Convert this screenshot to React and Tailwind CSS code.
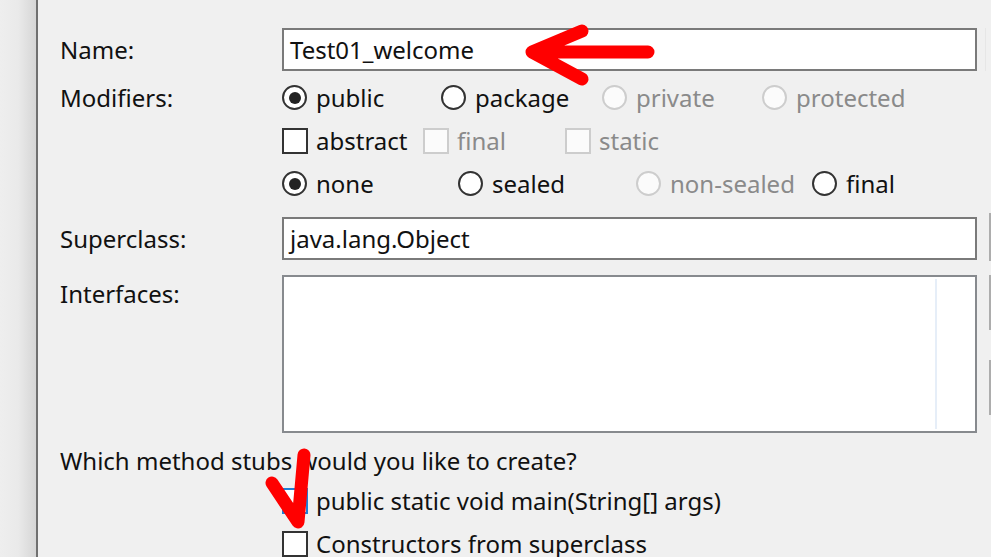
import React from "react";

function Radio({ checked, disabled, label, className = "" }) {
  return (
    <div className={`flex items-center ${className}`}>
      <div
        className={`w-[25px] h-[25px] rounded-full border-2 flex items-center justify-center shrink-0 ${
          disabled ? "border-[#cdcdcd] bg-[#fbfbfb]" : "border-[#333333] bg-white"
        }`}
      >
        {checked && <div className="w-[12px] h-[12px] rounded-full bg-[#222222]" />}
      </div>
      <span className={`ml-[9px] whitespace-nowrap ${disabled ? "text-[#8a8a8a]" : "text-[#111111]"}`}>{label}</span>
    </div>
  );
}

function Check({ disabled, label, className = "", checkedBlue }) {
  return (
    <div className={`flex items-center ${className}`}>
      <div
        className={`w-[26px] h-[26px] border-2 shrink-0 flex items-center justify-center ${
          checkedBlue
            ? "border-[#1e7fd6] bg-white"
            : disabled
            ? "border-[#cdcdcd] bg-[#fbfbfb]"
            : "border-[#333333] bg-white"
        }`}
      >
        {checkedBlue && (
          <svg width="18" height="18" viewBox="0 0 18 18">
            <path d="M3 9 L7 13 L15 4" fill="none" stroke="#1e7fd6" strokeWidth="2" />
          </svg>
        )}
      </div>
      <span className={`ml-[8px] whitespace-nowrap ${disabled ? "text-[#8a8a8a]" : "text-[#111111]"}`}>{label}</span>
    </div>
  );
}

export default function App() {
  return (
    <div
      className="relative w-[991px] h-[557px] overflow-hidden bg-[#f0f0f0] flex text-[24px] text-[#111111]"
      style={{ fontFamily: '"Noto Sans", "Open Sans", sans-serif' }}
    >
      <div className="w-[36px] h-full bg-gradient-to-r from-[#eeeeee] via-[#eaeaea] to-[#d6d6d6] shrink-0" />
      <div className="w-[2px] h-full bg-[#707070] shrink-0" />
      <div className="flex-1 pl-[22px] pt-[28px] flex flex-col">
        {/* Name */}
        <div className="flex h-[43px]">
          <div className="w-[222px] flex items-center shrink-0">Name:</div>
          <div className="w-[695px] h-[43px] border-2 border-[#7a7a7a] bg-white flex items-center pl-[6px] shrink-0">
            Test01_welcome
          </div>
          <div className="ml-[8px] w-[20px] h-[43px] border-l border-[#e6e6e6]" />
        </div>
        {/* Modifiers */}
        <div className="flex mt-[5px]">
          <div className="w-[222px] h-[43px] flex items-center shrink-0">Modifiers:</div>
          <div className="flex flex-col">
            <div className="flex h-[43px] items-center">
              <Radio checked label="public" className="w-[159px]" />
              <Radio label="package" className="w-[161px]" />
              <Radio disabled label="private" className="w-[160px]" />
              <Radio disabled label="protected" />
            </div>
            <div className="flex h-[43px] items-center">
              <Check label="abstract" className="w-[141px]" />
              <Check disabled label="final" className="w-[142px]" />
              <Check disabled label="static" />
            </div>
            <div className="flex h-[43px] items-center">
              <Radio checked label="none" className="w-[176px]" />
              <Radio label="sealed" className="w-[178px]" />
              <Radio disabled label="non-sealed" className="w-[176px]" />
              <Radio label="final" />
            </div>
          </div>
        </div>
        {/* Superclass */}
        <div className="flex mt-[12px] h-[43px]">
          <div className="w-[222px] flex items-center shrink-0">Superclass:</div>
          <div className="w-[695px] h-[43px] border-2 border-[#7a7a7a] bg-white flex items-center pl-[6px] shrink-0">
            java.lang.Object
          </div>
          <div className="ml-[12px] mt-[-4px] w-[20px] h-[48px] border-l-2 border-[#adadad] bg-[#e1e1e1]" />
        </div>
        {/* Interfaces */}
        <div className="flex mt-[15px] h-[158px]">
          <div className="w-[222px] shrink-0 pt-[1px]">Interfaces:</div>
          <div className="w-[695px] h-[158px] border-2 border-[#878a8e] bg-white shrink-0 flex justify-end pr-[38px] py-[2px]">
            <div className="w-[2px] h-full bg-[#e6eef8]" />
          </div>
          <div className="ml-[12px] flex flex-col">
            <div className="w-[20px] h-[55px] border-l-2 border-[#adadad] bg-[#e1e1e1]" />
            <div className="w-[20px] h-[55px] mt-[30px] border-l-2 border-[#adadad] bg-[#e1e1e1]" />
          </div>
        </div>
        {/* Which */}
        <div className="h-[40px] mt-[10px] flex items-center whitespace-nowrap">Which method stubs would you like to create?</div>
        <div className="flex flex-col pl-[222px]">
          <div className="h-[43px] flex items-center">
            <Check checkedBlue label="public static void main(String[] args)" />
          </div>
          <div className="h-[43px] flex items-center">
            <Check label="Constructors from superclass" />
          </div>
        </div>
      </div>

      {/* Red annotation arrow */}
      <svg className="absolute left-0 top-0 pointer-events-none" width="991" height="557" viewBox="0 0 991 557">
        <path
          d="M648 52 L532 52 M582 31 L532 52 L582 79"
          fill="none"
          stroke="#ff0000"
          strokeWidth="13"
          strokeLinecap="round"
          strokeLinejoin="round"
        />
        <path
          d="M272 483 L298 522 L304 455"
          fill="none"
          stroke="#ff0000"
          strokeWidth="13"
          strokeLinecap="round"
          strokeLinejoin="round"
        />
      </svg>
    </div>
  );
}
